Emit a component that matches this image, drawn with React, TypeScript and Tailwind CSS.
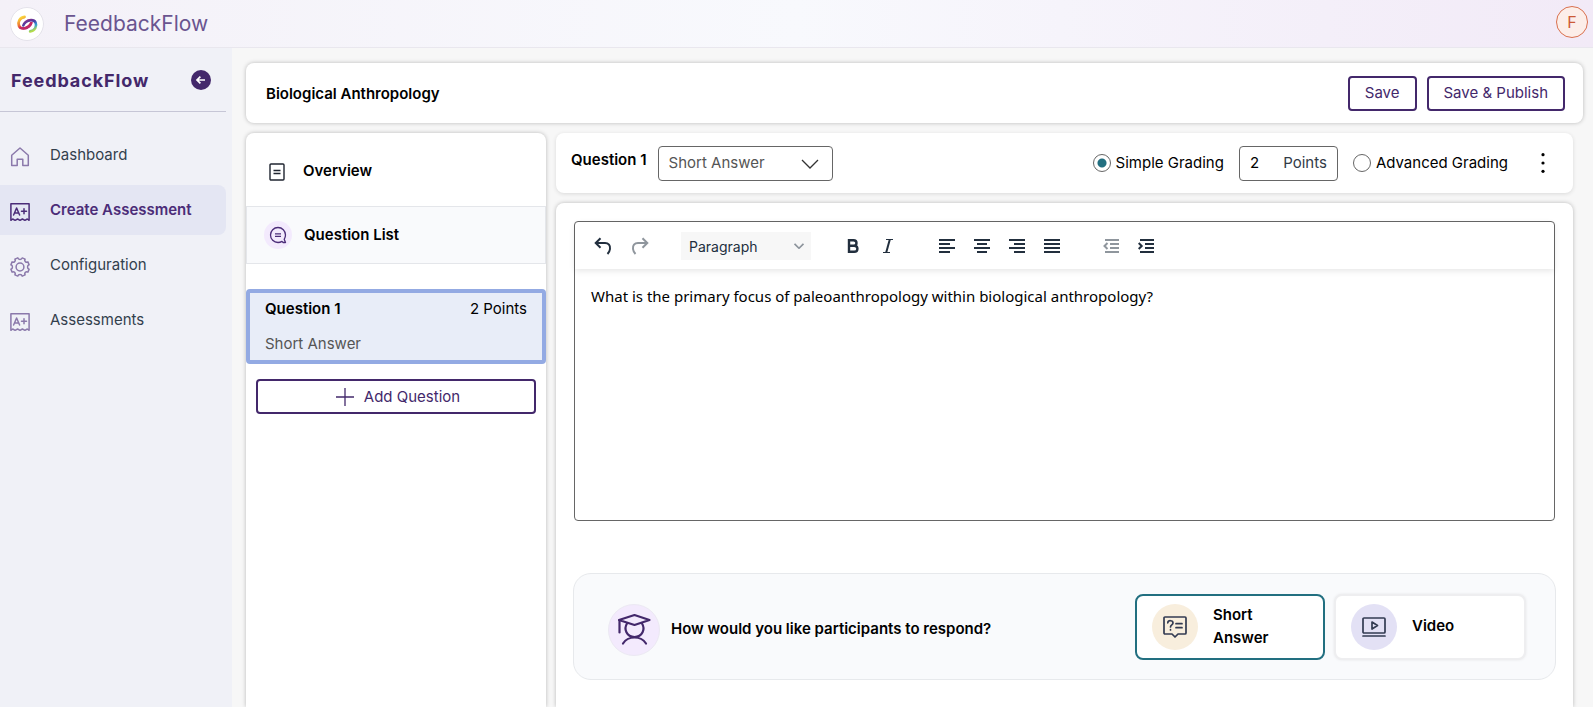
import type { ReactNode } from 'react';

interface IconProps {
    className?: string;
}

const Logo = () => (
    <svg viewBox="0 0 34 34" className="h-[34px] w-[34px]" fill="none" strokeLinecap="round">
        <circle cx="17" cy="17" r="16.5" fill="#fff" stroke="#e4e2ea" />
        <defs>
            <linearGradient id="warm" x1="13" y1="9" x2="19" y2="21" gradientUnits="userSpaceOnUse">
                <stop offset="0" stopColor="#fbd83a" />
                <stop offset="0.4" stopColor="#f08a35" />
                <stop offset="0.75" stopColor="#dc2f45" />
                <stop offset="1" stopColor="#b0276f" />
            </linearGradient>
            <linearGradient id="cool" x1="15" y1="13" x2="20" y2="25" gradientUnits="userSpaceOnUse">
                <stop offset="0" stopColor="#8a2a86" />
                <stop offset="0.35" stopColor="#4a3fa5" />
                <stop offset="0.65" stopColor="#2f9fd6" />
                <stop offset="1" stopColor="#b4dc4a" />
            </linearGradient>
        </defs>
        <path d="M14.500 10C9.500 10.500 7.500 15.500 9 18.800C10.500 22.200 16 21.800 18.800 19.400C20.300 18 21.300 16.500 21.500 14.800" stroke="url(#warm)" strokeWidth="2.800" />
        <path d="M20.100 24.400C25.100 23.900 27.100 18.900 25.600 15.600C24.100 12.200 18.600 12.600 15.800 15C14.300 16.400 13.300 17.900 13.100 19.600" stroke="#fff" strokeWidth="3.800" strokeLinecap="butt" />
        <path d="M20.100 24.400C25.100 23.900 27.100 18.900 25.600 15.600C24.100 12.200 18.600 12.600 15.800 15C14.300 16.400 13.500 17.400 13.300 18.400" stroke="url(#cool)" strokeWidth="2.600" />
        <path d="M10.500 20.800C13.500 22 16.500 21.300 18.800 19.400C20.300 18 21.100 17 21.400 15.800" stroke="#c0286a" strokeWidth="2.200" />
    </svg>
);

const HomeIcon = () => (
    <svg viewBox="0 0 20 20" className="h-5 w-5" fill="none" stroke="currentColor" strokeWidth="1.500" strokeLinejoin="round">
        <path d="M1.700 8.200L10 1L18.300 8.200V18.600H12.800V12.300H7.200V18.600H1.700Z" />
    </svg>
);

const GradeIcon = () => (
    <svg viewBox="0 0 20 20" className="h-5 w-5" fill="none" stroke="currentColor" strokeWidth="1.500" strokeLinejoin="round" strokeLinecap="round">
        <path d="M0.900 18.300V1.700H19.100V18.300L17.300 17L14.900 18.300L12.400 17L10 18.300L7.600 17L5.100 18.300L2.700 17Z" />
        <path d="M3.600 13L6.600 6L9.600 13M4.600 11H8.600M11.500 9.300H16.500M14 6.800V11.800" />
    </svg>
);

const GearIcon = () => (
    <svg viewBox="0 0 20 20" className="h-5 w-5" fill="none" stroke="currentColor" strokeWidth="1.500" strokeLinejoin="round">
        <path d="M7.800 0.900C8.300 3 11.700 3 12.200 0.900L15.100 2.100C14 4 16 6 17.900 4.900L19.100 7.800C17 8.300 17 11.700 19.100 12.200L17.900 15.100C16 14 14 16 15.100 17.900L12.200 19.100C11.700 17 8.300 17 7.800 19.100L4.900 17.900C6 16 4 14 2.100 15.100L0.900 12.200C3 11.700 3 8.300 0.900 7.800L2.100 4.900C4 6 6 4 4.900 2.100Z" />
        <circle cx="10" cy="10" r="3.900" />
    </svg>
);

const ArrowLeftCircle = () => (
    <svg viewBox="0 0 20 20" className="h-5 w-5" fill="none">
        <circle cx="10" cy="10" r="10" fill="#43286b" />
        <path d="M14 10H6.200M9.400 6.700L6 10L9.400 13.300" stroke="#fff" strokeWidth="1.700" />
    </svg>
);

const DocIcon = () => (
    <svg viewBox="0 0 20 20" className="h-5 w-5" fill="none" stroke="#1f2430" strokeWidth="1.400">
        <rect x="3" y="2" width="14" height="16" rx="1" />
        <path d="M6.500 8.500H13.500M6.500 11.500H13.500" />
    </svg>
);

const ChatIcon = () => (
    <svg viewBox="0 0 18 18" className="h-[18px] w-[18px]" fill="none" stroke="#4b2c78" strokeWidth="1.300">
        <path d="M16.500 16.500H14.200L13 15.400C11.800 16.100 10.500 16.500 9 16.500C4.800 16.500 1.500 13.200 1.500 9C1.500 4.800 4.800 1.500 9 1.500S16.500 4.800 16.500 9C16.500 10.600 16 12 15.200 13.300Z" strokeLinejoin="round" />
        <path d="M6 7.800H12M6 10.300H12" />
    </svg>
);

const ChevronIcon = ({ className }: IconProps) => (
    <svg viewBox="0 0 18 10" className={className} fill="none" stroke="currentColor">
        <path d="M1 1L9 9L17 1" />
    </svg>
);

const UndoIcon = ({ className }: IconProps) => (
    <svg viewBox="0 0 18 18" className={className} fill="none" stroke="currentColor" strokeWidth="2">
        <path d="M6.500 1.200L1.700 6L6.500 10.800M2 6H11C14.500 6 16.500 8.500 16 12C15.800 13.800 15 15.500 13.500 17" />
    </svg>
);

const LinesIcon = ({ d }: { d: string }) => (
    <svg viewBox="0 0 16 14" className="h-[14px] w-4" fill="none" stroke="currentColor" strokeWidth="2">
        <path d={d} />
    </svg>
);

const StudentIcon = () => (
    <svg viewBox="0 0 34 34" className="h-[34px] w-[34px]" fill="none" stroke="#43286b" strokeWidth="2.200" strokeLinecap="round" strokeLinejoin="round">
        <path d="M2 7L17.500 2L32.500 7L17.500 12Z" />
        <path d="M2.500 7.500V19.500" />
        <path d="M10 10.500C6.500 16 9.500 24 17.500 24S28.500 16 25 10.500" />
        <path d="M6 30.500C11 22.500 24 22.500 29 30.500" />
    </svg>
);

const QuestionIcon = () => (
    <svg viewBox="0 0 24 22" className="h-[22px] w-6" fill="none" stroke="#333b52" strokeWidth="1.700" strokeLinecap="round" strokeLinejoin="round">
        <path d="M2 1H22Q23 1 23 2V17Q23 18 22 18H15L12 21L9 18H2Q1 18 1 17V2Q1 1 2 1Z" />
        <path d="M4.800 6.800C5 4 10 4 10 7C10 9 7.500 8.800 7.500 11M7.500 13.700V13.900M13 7.700H19M13 11.700H19" />
    </svg>
);

const VideoIcon = () => (
    <svg viewBox="0 0 24 20" className="h-5 w-6" fill="none" stroke="#333b52" strokeWidth="1.700" strokeLinecap="round" strokeLinejoin="round">
        <rect x="1" y="1" width="22" height="15" rx="1" />
        <path d="M1 19H23M10 5L15.500 8.500L10 12Z" />
    </svg>
);

const navItems: { label: string; icon: ReactNode; active?: boolean }[] = [
    { label: 'Dashboard', icon: <HomeIcon /> },
    { label: 'Create Assessment', icon: <GradeIcon />, active: true },
    { label: 'Configuration', icon: <GearIcon /> },
    { label: 'Assessments', icon: <GradeIcon /> },
];

const alignments = [
    { label: 'Align left', d: 'M0 1H16M0 5H11M0 9H16M0 13H11' },
    { label: 'Align center', d: 'M0 1H16M3 5H13M0 9H16M3 13H13' },
    { label: 'Align right', d: 'M0 1H16M5 5H16M0 9H16M5 13H16' },
    { label: 'Justify', d: 'M0 1H16M0 5H16M0 9H16M0 13H16' },
];

const Header = () => (
    <header className="flex h-12 shrink-0 items-center border-b border-[#e9e7ee] bg-linear-to-r from-[#f4f1f8] via-[#f8f9fd] to-[#f2eaf7] pr-[5px] pl-[10px]">
        <Logo />
        <span className="ml-5 flex-1 text-[21px] text-[#6a5590]">FeedbackFlow</span>
        <button
            type="button"
            aria-label="Account"
            className="mb-1 flex h-8 w-8 items-center justify-center rounded-full border border-[#d9704f] bg-[#fceee9] text-base text-[#cc5a36]"
        >
            F
        </button>
    </header>
);

const Sidebar = () => (
    <aside className="flex w-[232px] shrink-0 flex-col bg-[#f0f1f7] pr-[6px]">
        <div className="flex h-16 items-center justify-between border-b border-[#c6c6d6] pr-[15px] pl-[11px]">
            <span className="pt-[2px] text-lg font-bold tracking-wider text-[#43286b]">FeedbackFlow</span>
            <button type="button" aria-label="Collapse menu">
                <ArrowLeftCircle />
            </button>
        </div>
        <nav className="mt-[18px] flex flex-col gap-[5px]">
            {navItems.map((item) => (
                <a
                    key={item.label}
                    href="#"
                    className={
                        item.active
                            ? 'flex h-[50px] items-center gap-5 rounded-r-lg bg-[#e4e6f3] pl-[10px] text-[15px] font-semibold text-[#4b2c78]'
                            : 'flex h-[50px] items-center gap-5 rounded-r-lg pl-[10px] text-[15px] text-[#333f4d]'
                    }
                >
                    <span className={item.active ? 'pt-1 text-[#4b2c78]' : 'pt-1 text-[#8b79ab]'}>{item.icon}</span>
                    {item.label}
                </a>
            ))}
        </nav>
    </aside>
);

const TitleBar = () => (
    <div className="mr-[10px] flex h-[60px] shrink-0 items-center gap-[10px] rounded-lg bg-white pr-[18px] pl-5 shadow-[0_0_4px_rgba(0,0,0,0.25)]">
        <h1 className="flex-1 pt-[2px] text-[15px] font-semibold">Biological Anthropology</h1>
        <button type="button" className="h-[35px] rounded border-2 border-[#43286b] px-[15px] text-[15px] text-[#43286b]">
            Save
        </button>
        <button type="button" className="h-[35px] rounded border-2 border-[#43286b] px-[15px] text-[15px] text-[#43286b]">
            Save &amp; Publish
        </button>
    </div>
);

const QuestionPanel = () => (
    <section className="flex w-[300px] shrink-0 flex-col rounded-t-lg bg-white text-[15px] shadow-[0_0_4px_rgba(0,0,0,0.25)]">
        <button type="button" className="flex h-[73px] items-center gap-4 pt-1 pl-[21px] font-semibold">
            <DocIcon />
            Overview
        </button>
        <button type="button" className="flex h-[58px] items-center gap-3 border border-[#e4e6ea] bg-[#f9fafc] pl-[17px] font-semibold">
            <span className="flex h-7 w-7 items-center justify-center rounded-full bg-[#f3eafd]">
                <ChatIcon />
            </span>
            Question List
        </button>
        <button type="button" className="mt-[25px] flex h-[75px] flex-col items-start justify-between rounded border-4 border-[#93aae3] bg-[#e8edf8] px-[15px] py-[5px]">
            <span className="flex w-full justify-between">
                <span className="font-semibold">Question 1</span>
                <span>2 Points</span>
            </span>
            <span className="text-[#555]">Short Answer</span>
        </button>
        <button type="button" className="mx-[10px] mt-[15px] flex h-[35px] items-center justify-center gap-[10px] rounded border-2 border-[#43286b] pt-px pl-1 text-[#43286b]">
            <svg viewBox="0 0 18 18" className="h-[18px] w-[18px]" stroke="currentColor" strokeWidth="1.300">
                <path d="M9 0V18M0 9H18" />
            </svg>
            Add Question
        </button>
    </section>
);

const QuestionBar = () => (
    <div className="flex h-[60px] shrink-0 items-center rounded-lg bg-white pr-[18px] pl-[15px] text-[15px] shadow-[0_1px_4px_rgba(0,0,0,0.12)]">
        <h2 className="pb-[6px] font-semibold">Question 1</h2>
        <div className="relative ml-[11px]">
            <select aria-label="Question type" className="h-[35px] w-[175px] appearance-none rounded border border-[#666] pl-[10px] text-[#555]">
                <option>Short Answer</option>
                <option>Video</option>
            </select>
            <ChevronIcon className="pointer-events-none absolute top-[13px] right-[14px] h-[10px] w-[18px] text-[#333] [stroke-width:1.3]" />
        </div>
        <div className="flex-1" />
        <label className="flex items-center gap-[5px]">
            <input
                type="radio"
                name="grading"
                defaultChecked
                className="h-[18px] w-[18px] appearance-none rounded-full border border-[#666] checked:bg-[radial-gradient(circle,#226f80_4px,white_5px)]"
            />
            Simple Grading
        </label>
        <label className="mx-[15px] flex h-[35px] w-[99px] items-center justify-between rounded border border-[#666] px-[10px] text-[#333b47]">
            <input type="text" defaultValue="2" className="w-6 text-black outline-none" />
            Points
        </label>
        <label className="flex items-center gap-[5px]">
            <input
                type="radio"
                name="grading"
                className="h-[18px] w-[18px] appearance-none rounded-full border border-[#666] checked:bg-[radial-gradient(circle,#226f80_4px,white_5px)]"
            />
            Advanced Grading
        </label>
        <button type="button" aria-label="More options" className="ml-[23px] flex h-6 w-6 items-center justify-center">
            <svg viewBox="0 0 4 20" className="h-5 w-1" fill="#000">
                <circle cx="2" cy="1.700" r="1.600" />
                <circle cx="2" cy="10" r="1.600" />
                <circle cx="2" cy="18.300" r="1.600" />
            </svg>
        </button>
    </div>
);

const Editor = () => (
    <div className="flex h-[300px] shrink-0 flex-col rounded border border-[#666]">
        <div className="flex h-[47px] shrink-0 items-center rounded-t pl-[19px] text-[#222f3e] shadow-[0_2px_6px_rgba(0,0,0,0.1)]">
            <button type="button" aria-label="Undo">
                <UndoIcon className="h-[18px] w-[18px]" />
            </button>
            <button type="button" aria-label="Redo" className="ml-[19px] opacity-50">
                <UndoIcon className="h-[18px] w-[18px] -scale-x-100" />
            </button>
            <div className="relative ml-8">
                <select aria-label="Block format" className="h-7 w-[130px] appearance-none bg-[#f7f7f7] pt-[2px] pl-2 text-sm">
                    <option>Paragraph</option>
                    <option>Heading 1</option>
                </select>
                <ChevronIcon className="pointer-events-none absolute top-[11px] right-[7px] h-[6px] w-[10px] text-[#8d949c] [stroke-width:3]" />
            </div>
            <button type="button" aria-label="Bold" className="ml-[34px] w-4">
                <svg viewBox="0 0 14 16" className="mx-auto h-4 w-[14px]" fill="none" stroke="currentColor" strokeWidth="2.400">
                    <path d="M3 2.200H7.500C11.500 2.200 11.500 7.700 7.500 7.700H3M3 7.700H8.200C12.500 7.700 12.500 13.800 8.200 13.800H3M3 1V15" />
                </svg>
            </button>
            <button type="button" aria-label="Italic" className="ml-[19px] w-4">
                <svg viewBox="0 0 14 16" className="mx-auto h-4 w-[14px]" fill="none" stroke="currentColor">
                    <path d="M5 1.500H12M2 14.500H9" />
                    <path d="M8.800 1.500L5.200 14.500" strokeWidth="2" />
                </svg>
            </button>
            <div className="ml-[43px] flex gap-[19px]">
                {alignments.map((item) => (
                    <button key={item.label} type="button" aria-label={item.label}>
                        <LinesIcon d={item.d} />
                    </button>
                ))}
            </div>
            <div className="ml-[43px] flex gap-[19px]">
                <button type="button" aria-label="Decrease indent" className="opacity-50">
                    <LinesIcon d="M2 1H16M7 5H16M7 9H16M2 13H16M4.500 4L1.500 7L4.500 10" />
                </button>
                <button type="button" aria-label="Increase indent">
                    <LinesIcon d="M2 1H16M7 5H16M7 9H16M2 13H16M0.700 4L3.700 7L0.700 10" />
                </button>
            </div>
        </div>
        <textarea
            aria-label="Question text"
            defaultValue="What is the primary focus of paleoanthropology within biological anthropology?"
            className="flex-1 resize-none px-4 pt-[15px] font-['Noto_Sans',sans-serif] text-[15px] leading-6 outline-none"
        />
    </div>
);

const ResponsePicker = () => (
    <div className="-mx-px mt-[52px] flex h-[107px] shrink-0 items-center rounded-[18px] border border-[#e7e9ec] bg-[#f9fafc] pr-[29px] pl-[34px] text-[15px] font-semibold">
        <span className="mt-[6px] flex h-[52px] w-[52px] items-center justify-center rounded-full border border-[#ece9f3] bg-[#f3eafd]">
            <StudentIcon />
        </span>
        <h3 className="ml-[11px] flex-1 pt-[6px]">How would you like participants to respond?</h3>
        <button type="button" className="flex h-[66px] w-[190px] items-center rounded-lg border-2 border-[#226f80] bg-white pl-[15px] text-left leading-[23px]">
            <span className="flex h-[46px] w-[46px] items-center justify-center rounded-full bg-[#f8eedd]">
                <QuestionIcon />
            </span>
            <span className="mb-[2px] ml-[15px] w-20">Short Answer</span>
        </button>
        <button type="button" className="ml-[9px] flex h-[66px] w-48 items-center rounded-lg border-2 border-[#eeeef0] bg-white pl-[15px] text-left leading-[23px] shadow-[0_0_3px_rgba(0,0,0,0.08)]">
            <span className="flex h-[46px] w-[46px] items-center justify-center rounded-full bg-[#e3e1f5]">
                <VideoIcon />
            </span>
            <span className="mb-[2px] ml-[15px]">Video</span>
        </button>
    </div>
);

const App = () => {
    return (
        <div className="flex h-screen flex-col overflow-hidden bg-[#f7f7f7] font-['Inter',sans-serif] text-black">
            <Header />
            <div className="flex min-h-0 flex-1">
                <Sidebar />
                <main className="flex min-w-0 flex-1 flex-col gap-[10px] pt-[15px] pl-[14px]">
                    <TitleBar />
                    <div className="flex min-h-0 flex-1 gap-[10px] pr-5">
                        <QuestionPanel />
                        <div className="flex min-w-0 flex-1 flex-col gap-[10px]">
                            <QuestionBar />
                            <section className="flex flex-1 flex-col rounded-t-lg bg-white px-[18px] pt-[18px] shadow-[0_0_4px_rgba(0,0,0,0.25)]">
                                <Editor />
                                <ResponsePicker />
                            </section>
                        </div>
                    </div>
                </main>
            </div>
        </div>
    );
};

export default App;
